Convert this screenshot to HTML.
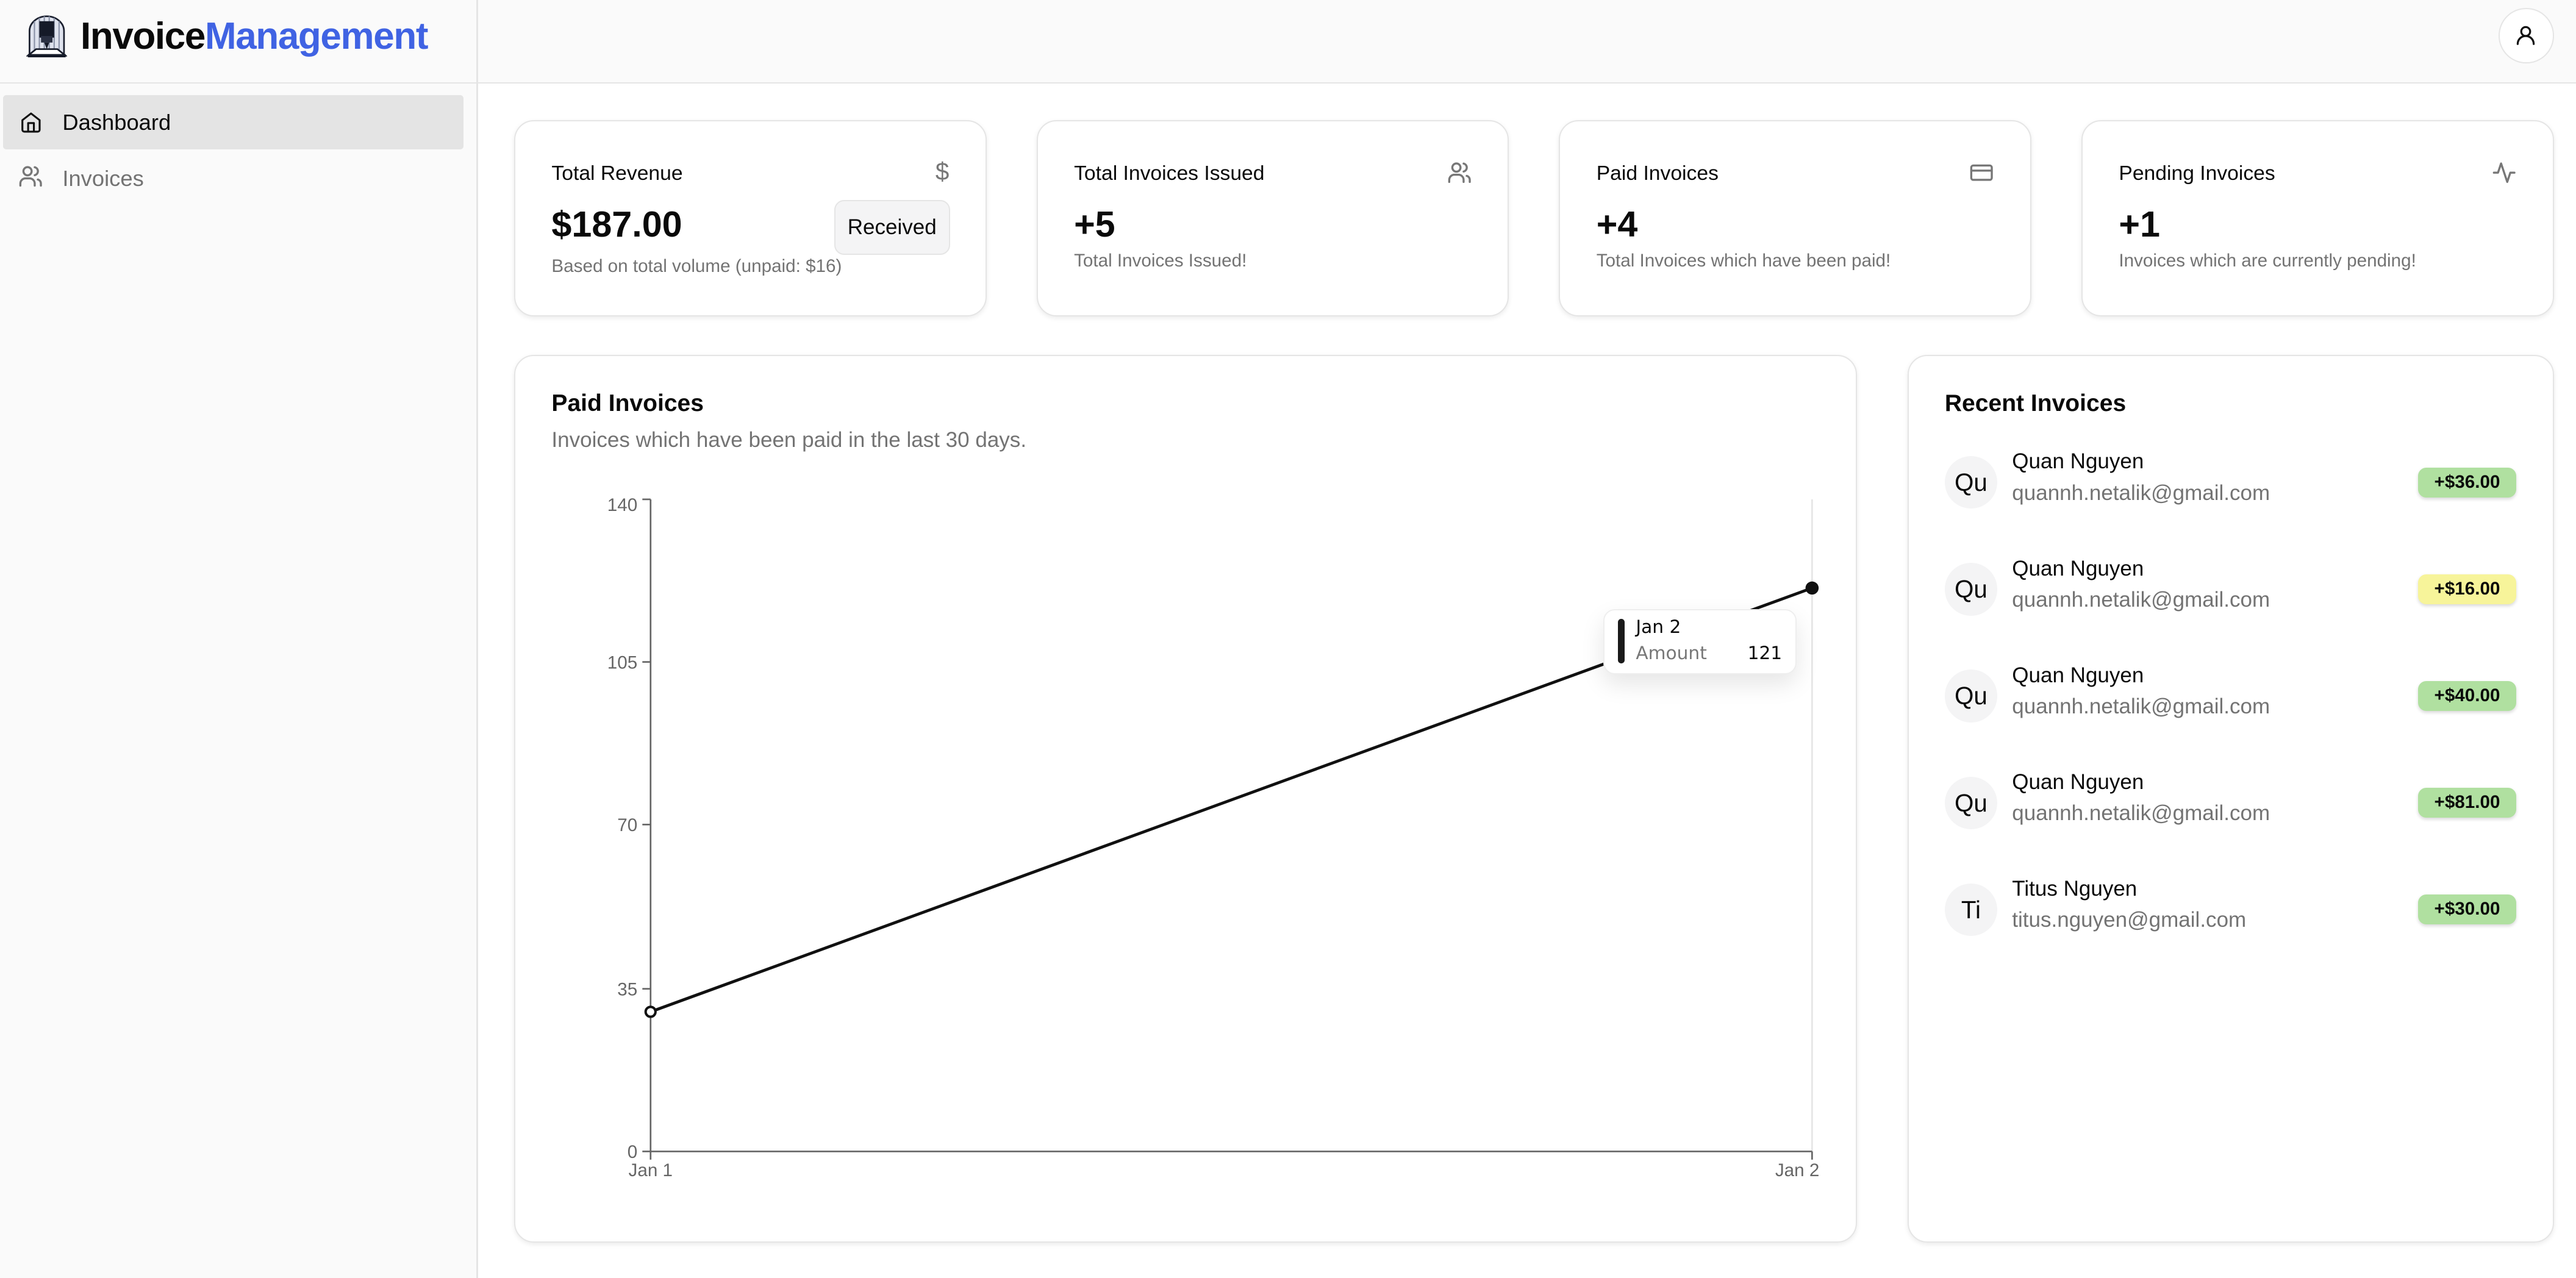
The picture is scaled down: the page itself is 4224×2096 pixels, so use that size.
<!DOCTYPE html>
<html><head><meta charset="utf-8">
<style>
html,body{margin:0;padding:0}
body{width:1568px;height:777.3px;zoom:2.69388;font-family:"Liberation Sans",sans-serif;background:#fff;position:relative;overflow:hidden;color:#0a0a0a}
.a{position:absolute}
.side{left:0;top:0;width:290px;height:778px;background:#fafafa;border-right:1px solid #e5e5e5}
.head{left:0;top:0;width:1568px;height:50px;background:#fafafa;border-bottom:1px solid #e5e5e5}
.card{background:#fff;border:1px solid #e5e5e5;border-radius:12px;box-shadow:0 1px 3px rgba(0,0,0,.08)}
.ct{font-size:12.5px;left:22px;top:25px}
.cv{font-size:22px;font-weight:bold;left:22px;top:50px}
.cs{font-size:11px;color:#737373;left:22px;top:82px}
.row{left:22px;width:348px;height:40px}
.av{left:0;top:0;width:32px;height:32px;border-radius:50%;background:#f4f4f5;font-size:15px;text-align:center;line-height:32px}
.nm{left:41px;top:-4px;font-size:13px}
.em{left:41px;top:15px;font-size:13px;color:#737373}
.bd{right:0;top:7px;width:60px;height:18px;border-radius:5px;font-size:11px;font-weight:bold;text-align:center;line-height:18px;box-shadow:0 1px 2px rgba(0,0,0,.15)}
.g{background:#b0e0a0}.y{background:#f7f49a}
svg text{font-family:"Liberation Sans",sans-serif}
</style></head><body>
<div class="a side"></div>
<div class="a head"></div>
<div class="a" style="left:290px;top:0;width:1px;height:778px;background:#e5e5e5"></div>
<!-- logo -->
<svg class="a" style="left:16px;top:9px" width="25" height="26" viewBox="0 0 25 26">
<path d="M2 25V10a10.5 9 0 0 1 21 0v15z" fill="#dfe3ee" stroke="#1a1f2e" stroke-width="1"/>
<path d="M5 4v18M8 2v20M11 1v20M14 1v20M17 2v20M20 4v18" stroke="#8b93a8" stroke-width=".8"/>
<rect x="8" y="4" width="9" height="10" fill="#151a28"/><rect x="9" y="13" width="7" height="4" fill="#2a3042"/>
<path d="M11 17h3l-1.5 4z" fill="#151a28"/>
<path d="M1 25l5-4h13l5 4z" fill="#fff" stroke="#151a28" stroke-width="1"/>
<rect x="1" y="24" width="23" height="2" fill="#151a28"/>
</svg>
<div class="a" style="left:49px;top:9px;font-size:23px;font-weight:bold;letter-spacing:-0.5px">Invoice<span style="color:#4063e3">Management</span></div>
<!-- nav -->
<div class="a" style="left:2px;top:58px;width:280px;height:33px;background:#e4e4e4;border-radius:2px"></div>
<svg class="a" style="left:12px;top:67px" width="14" height="15" viewBox="0 0 24 24" fill="none" stroke="#111" stroke-width="2" stroke-linecap="round" stroke-linejoin="round"><path d="M3 10l9-7 9 7v10a2 2 0 0 1-2 2H5a2 2 0 0 1-2-2z"/><path d="M9 22V13h6v9"/></svg>
<div class="a" style="left:38px;top:67px;font-size:13.5px">Dashboard</div>
<svg class="a" style="left:11px;top:100px" width="15" height="15" viewBox="0 0 24 24" fill="none" stroke="#777" stroke-width="2" stroke-linecap="round" stroke-linejoin="round"><circle cx="9" cy="7" r="4"/><path d="M2 21v-2a5 5 0 0 1 5-5h4a5 5 0 0 1 5 5v2"/><path d="M16 3.1a4 4 0 0 1 0 7.8"/><path d="M22 21v-2a4 4 0 0 0-3-3.9"/></svg>
<div class="a" style="left:38px;top:101px;font-size:13.5px;color:#737373">Invoices</div>
<!-- user btn -->
<div class="a" style="left:1521px;top:5px;width:32px;height:32px;border-radius:50%;border:1px solid #e5e5e5;background:#fff"></div>
<svg class="a" style="left:1531px;top:15px" width="13" height="13" viewBox="0 0 24 24" fill="none" stroke="#111" stroke-width="2.2" stroke-linecap="round"><circle cx="12" cy="8" r="5"/><path d="M3 22a9 9 0 0 1 18 0"/></svg>
<!-- cards -->
<div class="a card" style="left:313px;top:73px;width:286px;height:118px">
<div class="a ct">Total Revenue</div>
<div class="a" style="right:22px;top:22px;font-size:15px;color:#777">$</div>
<div class="a cv">$187.00</div>
<div class="a" style="left:194px;top:48px;width:69px;height:32px;background:#f4f4f5;border:1px solid #e5e5e5;border-radius:6px;font-size:13px;text-align:center;line-height:32px">Received</div>
<div class="a cs" style="top:82px">Based on total volume (unpaid: $16)</div>
</div>
<div class="a card" style="left:631px;top:73px;width:286px;height:118px">
<div class="a ct">Total Invoices Issued</div>
<svg class="a" style="right:22px;top:24px" width="15" height="15" viewBox="0 0 24 24" fill="none" stroke="#777" stroke-width="2" stroke-linecap="round"><circle cx="9" cy="7" r="4"/><path d="M2 21v-2a5 5 0 0 1 5-5h4a5 5 0 0 1 5 5v2"/><path d="M16 3.1a4 4 0 0 1 0 7.8"/><path d="M22 21v-2a4 4 0 0 0-3-3.9"/></svg>
<div class="a cv">+5</div>
<div class="a cs" style="top:79px">Total Invoices Issued!</div>
</div>
<div class="a card" style="left:949px;top:73px;width:286px;height:118px">
<div class="a ct">Paid Invoices</div>
<svg class="a" style="right:22px;top:24px" width="15" height="15" viewBox="0 0 24 24" fill="none" stroke="#777" stroke-width="2"><rect x="2" y="5" width="20" height="14" rx="2"/><path d="M2 10h20"/></svg>
<div class="a cv">+4</div>
<div class="a cs" style="top:79px">Total Invoices which have been paid!</div>
</div>
<div class="a card" style="left:1267px;top:73px;width:286px;height:118px">
<div class="a ct">Pending Invoices</div>
<svg class="a" style="right:22px;top:24px" width="15" height="15" viewBox="0 0 24 24" fill="none" stroke="#777" stroke-width="2" stroke-linejoin="round" stroke-linecap="round"><path d="M22 12h-4l-3 9L9 3l-3 9H2"/></svg>
<div class="a cv">+1</div>
<div class="a cs" style="top:79px">Invoices which are currently pending!</div>
</div>
<!-- chart card -->
<div class="a card" style="left:313px;top:216px;width:816px;height:539px">
<div class="a" style="left:22px;top:21px;font-size:14.5px;font-weight:bold">Paid Invoices</div>
<div class="a" style="left:22px;top:44px;font-size:13px;color:#737373">Invoices which have been paid in the last 30 days.</div>
</div>
<svg class="a" style="left:0;top:0" width="1568" height="778">
<line x1="1103" y1="304" x2="1103" y2="701" stroke="#e5e5e5" stroke-width="1"/>
<line x1="396" y1="304" x2="396" y2="701" stroke="#666" stroke-width="1"/>
<line x1="396" y1="701" x2="1103" y2="701" stroke="#666" stroke-width="1"/>
<g stroke="#666"><line x1="391" y1="304" x2="396" y2="304"/><line x1="391" y1="403" x2="396" y2="403"/><line x1="391" y1="502" x2="396" y2="502"/><line x1="391" y1="602" x2="396" y2="602"/><line x1="391" y1="701" x2="396" y2="701"/><line x1="396" y1="701" x2="396" y2="706"/><line x1="1103" y1="701" x2="1103" y2="706"/></g>
<g font-size="11" fill="#666" text-anchor="end"><text x="388" y="311">140</text><text x="388" y="407">105</text><text x="388" y="506">70</text><text x="388" y="606">35</text><text x="388" y="705">0</text></g>
<g font-size="11" fill="#666" text-anchor="middle"><text x="396" y="716">Jan 1</text><text x="1094" y="716">Jan 2</text></g>
<line x1="396" y1="616" x2="1103" y2="358" stroke="#111" stroke-width="1.8"/>
<circle cx="396" cy="616" r="3" fill="#fff" stroke="#111" stroke-width="1.5"/>
<circle cx="1103" cy="358" r="4" fill="#111"/>
</svg>
<div class="a" style="left:976px;top:371px;width:116px;height:38px;background:#fff;border:1px solid #eee;border-radius:7px;box-shadow:0 6px 14px rgba(0,0,0,.1)">
<div class="a" style="left:8px;top:5px;width:4px;height:27px;background:#1a1a1a;border-radius:2px"></div>
<div class="a" style="left:19px;top:3px;font-size:11px;font-family:'DejaVu Sans',sans-serif">Jan 2</div>
<div class="a" style="left:19px;top:19px;font-size:11px;color:#777;font-family:'DejaVu Sans',sans-serif">Amount</div>
<div class="a" style="right:8px;top:19px;font-size:11px;font-family:'DejaVu Sans',sans-serif">121</div>
</div>
<!-- recent -->
<div class="a card" style="left:1161px;top:216px;width:392px;height:539px">
<div class="a" style="left:22px;top:21px;font-size:14.5px;font-weight:bold">Recent Invoices</div>
<div class="a row" style="top:61px"><div class="a av">Qu</div><div class="a nm">Quan Nguyen</div><div class="a em">quannh.netalik@gmail.com</div><div class="a bd g">+$36.00</div></div>
<div class="a row" style="top:126px"><div class="a av">Qu</div><div class="a nm">Quan Nguyen</div><div class="a em">quannh.netalik@gmail.com</div><div class="a bd y">+$16.00</div></div>
<div class="a row" style="top:191px"><div class="a av">Qu</div><div class="a nm">Quan Nguyen</div><div class="a em">quannh.netalik@gmail.com</div><div class="a bd g">+$40.00</div></div>
<div class="a row" style="top:256px"><div class="a av">Qu</div><div class="a nm">Quan Nguyen</div><div class="a em">quannh.netalik@gmail.com</div><div class="a bd g">+$81.00</div></div>
<div class="a row" style="top:321px"><div class="a av">Ti</div><div class="a nm">Titus Nguyen</div><div class="a em">titus.nguyen@gmail.com</div><div class="a bd g">+$30.00</div></div>
</div>
</body></html>
